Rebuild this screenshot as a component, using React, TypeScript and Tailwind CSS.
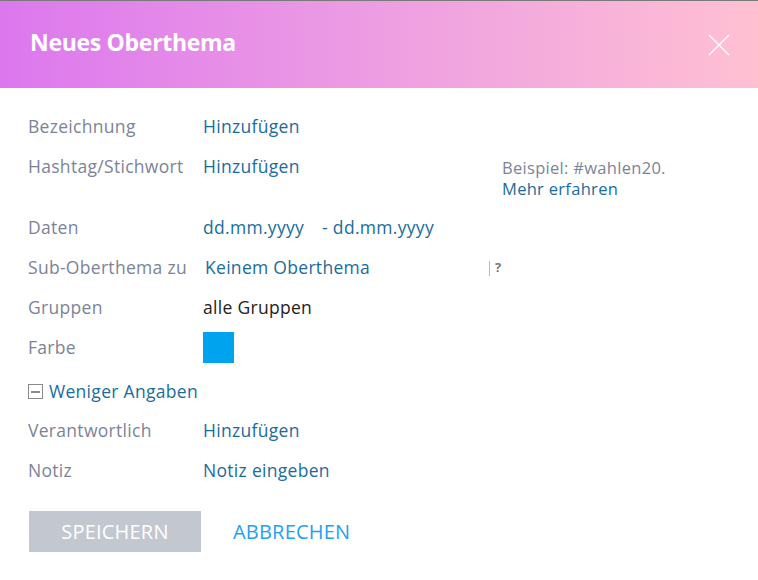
import React from 'react';

const font = { fontFamily: '"Open Sans", "Noto Sans", sans-serif' };

function Row({ label, children }: { label: string; children: React.ReactNode }) {
  return (
    <div className="flex items-start h-10">
      <div className="w-[175px] shrink-0 text-[#7b8399] leading-[24px]">{label}</div>
      <div className="flex-1 leading-[24px]">{children}</div>
    </div>
  );
}

export default function App() {
  return (
    <div className="w-[758px] h-[580px] bg-white overflow-hidden" style={font}>
      <div className="h-[88px] border-t border-[#7a7a7a] bg-gradient-to-r from-[#dc77ee] to-[#ffc0d2] flex items-center justify-between pl-[30px] pr-[28px]">
        <h1 className="text-white text-[23px] font-bold tracking-[-0.3px] mt-[-4px]">Neues Oberthema</h1>
        <svg width="22" height="22" viewBox="0 0 22 22">
          <path d="M1 1 L21 21 M21 1 L1 21" stroke="white" strokeWidth="1.4" fill="none" />
        </svg>
      </div>

      <div className="pt-[26px] px-[28px] text-[17.5px] tracking-[0.3px]">
        <Row label="Bezeichnung">
          <span className="text-[#1a6c9c]">Hinzufügen</span>
        </Row>
        <div className="flex items-start h-[61px]">
          <div className="w-[175px] shrink-0 text-[#7b8399] leading-[24px]">Hashtag/Stichwort</div>
          <div className="w-[299px] leading-[24px] text-[#1a6c9c]">Hinzufügen</div>
          <div className="text-[16.5px] leading-[21px] pt-[3px]">
            <div className="text-[#7b8399]">Beispiel: #wahlen20.</div>
            <div className="text-[#1a6c9c]">Mehr erfahren</div>
          </div>
        </div>
        <Row label="Daten">
          <span className="text-[#1a6c9c]">dd.mm.yyyy</span>
          <span className="text-[#1a6c9c] ml-[18px]">- dd.mm.yyyy</span>
        </Row>
        <div className="flex items-start h-10">
          <div className="w-[177px] shrink-0 text-[#7b8399] leading-[24px]">Sub-Oberthema zu</div>
          <div className="w-[284px] leading-[24px] text-[#1a6c9c]">Keinem Oberthema</div>
          <div className="flex items-center mt-[5px] h-[16px]">
            <span className="w-px h-[15px] bg-[#bbbbbb]" />
            <span className="ml-[5px] text-[13px] font-bold text-[#777]">?</span>
          </div>
        </div>
        <Row label="Gruppen">
          <span className="text-[#222]">alle Gruppen</span>
        </Row>
        <Row label="Farbe">
          <div className="w-[31px] h-[31px] bg-[#00a3ee] mt-[-3px]" />
        </Row>
        <div className="flex items-start h-[43px] pt-[4px]">
          <span className="w-[15px] h-[15px] border border-[#8a8a8a] flex items-center justify-center mr-[6px] mt-[5px]">
            <span className="w-[9px] h-[2px] bg-[#8a8a8a]" />
          </span>
          <span className="text-[#1a6c9c] leading-[24px]">Weniger Angaben</span>
        </div>
        <Row label="Verantwortlich">
          <span className="text-[#1a6c9c]">Hinzufügen</span>
        </Row>
        <Row label="Notiz">
          <span className="text-[#1a6c9c]">Notiz eingeben</span>
        </Row>

        <div className="flex items-center mt-[13px] pl-[1px]">
          <button className="w-[172px] h-[41px] bg-[#c3c7cf] text-white text-[20px] tracking-[0.2px] uppercase">Speichern</button>
          <button className="ml-[32px] text-[#1ea1f2] text-[20px] tracking-[0.2px] uppercase">Abbrechen</button>
        </div>
      </div>
    </div>
  );
}
